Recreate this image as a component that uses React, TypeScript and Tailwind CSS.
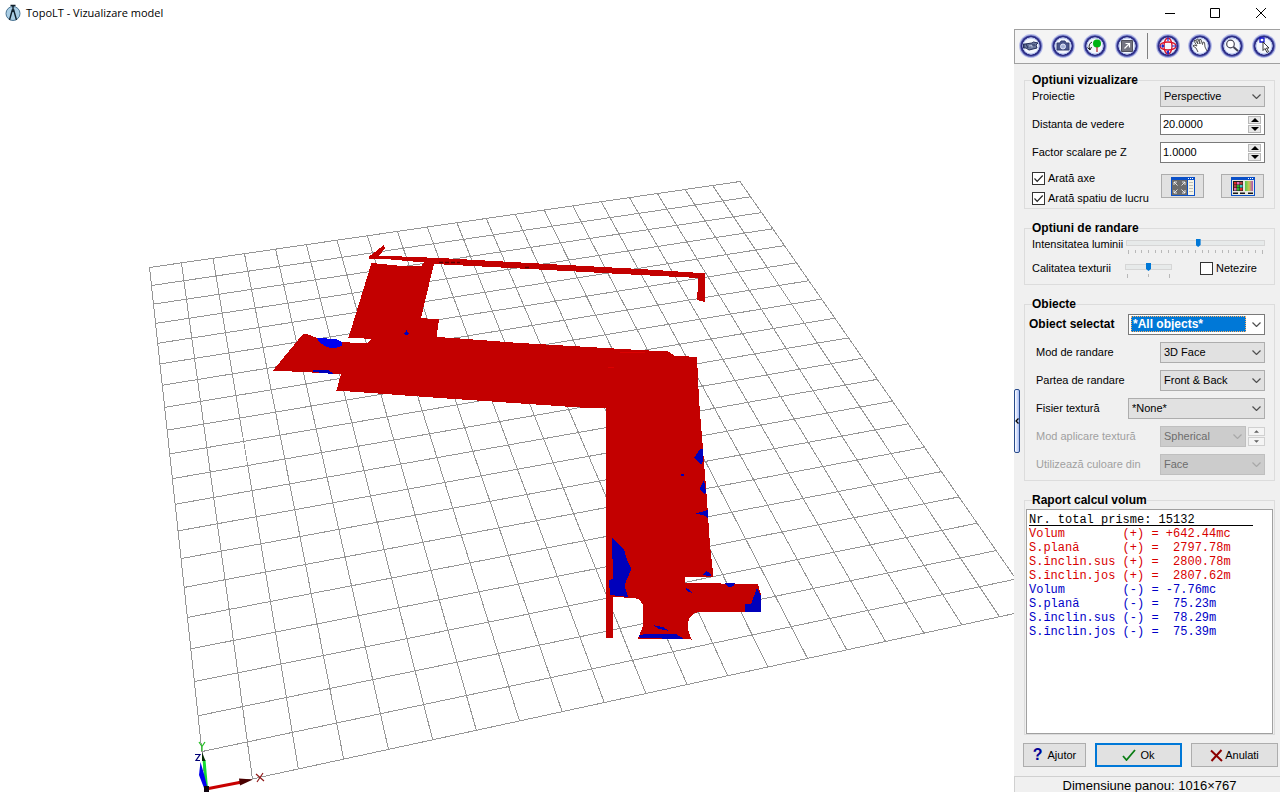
import type { ReactNode } from "react";
import clsx from "clsx";

type Point = [number, number];

const CELLS = 20;
const CORNERS: Point[] = [
  [149.5, 267.5],
  [740, 181.5],
  [1036.5, 608.7],
  [206, 789],
];

// Perspective map from the unit square to the ground plane quad
const project = (u: number, v: number): Point => {
  const [[x0, y0], [x1, y1], [x2, y2], [x3, y3]] = CORNERS;
  const dx1 = x1 - x2;
  const dx2 = x3 - x2;
  const dy1 = y1 - y2;
  const dy2 = y3 - y2;
  const sx = x0 - x1 + x2 - x3;
  const sy = y0 - y1 + y2 - y3;
  const det = dx1 * dy2 - dx2 * dy1;
  const g = (sx * dy2 - dx2 * sy) / det;
  const h = (dx1 * sy - sx * dy1) / det;
  const w = g * u + h * v + 1;
  return [
    ((x1 - x0 + g * x1) * u + (x3 - x0 + h * x3) * v + x0) / w,
    ((y1 - y0 + g * y1) * u + (y3 - y0 + h * y3) * v + y0) / w,
  ];
};

const gridPath = Array.from({ length: CELLS + 1 }, (_, i) => {
  const t = i / CELLS;
  return `M${project(t, 0)}L${project(t, 1)}M${project(0, t)}L${project(1, t)}`;
}).join("");

const Viewport = () => (
  <main className="min-w-0 flex-1 bg-white">
    <svg viewBox="0 25 1014 767" className="block h-full w-full" role="img" aria-label="Model 3D">
      <path d={gridPath} fill="none" stroke="#969696" strokeWidth="1" shapeRendering="crispEdges" />
      <g fill="#c30000" shapeRendering="crispEdges">
        <path d="M369 256.500L384 245L385 248.500L379 255.500L413 257L440 258L530 263L640 269L705 273.300V302L697 300L698.500 278L640 275L530 269L440 264.300L434 263.500L421 318L439 319.500L436.500 337L453 338L520 343L640 350L668 351.500L674 355.500L697 357L699 400L702 437L707 500L710 545L713.500 577L684.500 577V583L758 584L761 595V611.500H702L695 613L690 617L688 622V630L691.500 639.500L638 638.500L643 626V605L640 600L634 598L613.500 597L613 638H606.500L605.500 408.500L580 407.500L440 398L336.500 390.500L341 374L273 370.500L303 334L308 334.500L317 338L342 342L367 343.500L372 339L348.500 337.500L371.500 263L397 265.500L421.500 265.700L424 262.500L380 258.500L369 259Z" />
      </g>
      <g fill="#0000bb" shapeRendering="crispEdges">
        <path fill="#0000f0" d="M317 338L336 339L342 342V346L334 348.500L327 347L320 343Z" />
        <path d="M310 371L318 369.500H327L334 374L322 373Z" />
        <path d="M404 334L406.500 330L409 334L406 335.500Z" />
        <path d="M694 458L700 449H703V461L701 464.500L698 461Z" />
        <path d="M681 474H684V476H681Z" />
        <path d="M700 488L704 480L706 492L704 494L701 491Z" />
        <path d="M696 513.500L708 510V518L704 515.500Z" />
        <path d="M703 575L706 571L710 573L712 576.500Z" />
        <path d="M612 538L624 549L627 560L631.500 569L627 579L624.500 586L628 597L610 595L609 580L613 579Z" />
        <path d="M724 583H735L734 586L729 587.500Z" />
        <path d="M686 588L690 590L692 593L687 591Z" />
        <path d="M757 588L761 596V611.500H745V604L751 604Z" />
        <path d="M653 625L664 627.500L669 631L659 629Z" />
        <path d="M639 635L652 633.500L675 633.500L684 639L640 638Z" />
      </g>
      <path d="M439 262.500H460M525 267.500H531" stroke="#5c0000" strokeWidth="1.500" strokeDasharray="4 2" />
      <path d="M620 352.500H645M608 367.500H614" stroke="#dc0000" />
      <g strokeWidth="3">
        <path d="M206 789L242 782" stroke="#c80000" />
        <path d="M239 778.500L253 779.500L240 785.500Z" fill="#4a0000" stroke="none" />
        <path d="M202.500 759L205.500 760L208 788H205Z" fill="#14dc32" stroke="none" />
        <path d="M202 752L205.500 761H202Z" fill="#052a05" stroke="none" />
        <path d="M200.500 762L204 774L207.500 788H204L199 775Z" fill="#0000f0" stroke="none" />
        <path d="M204 786H209V792H204Z" fill="#100510" stroke="none" />
      </g>
      <g fill="none" strokeWidth="1.200">
        <path d="M199 742L202 746.500L205 742M202 746V751" stroke="#1ebe1e" />
        <path d="M195 754.500H200L196 760.500H200" stroke="#000078" />
        <path d="M256 774L264 781M263 773L257 782" stroke="#901818" />
      </g>
    </svg>
  </main>
);

const Logo = () => (
  <svg width="16" height="18" viewBox="0 0 16 18" aria-hidden="true">
    <circle cx="8" cy="9.500" r="7" fill="#a9cde4" stroke="#4c7695" />
    <path d="M8 1.500V8M4.500 16L7.300 6H8.700L11.500 16M5.500 1.500H10.500" fill="none" stroke="#10202c" strokeWidth="1.400" />
  </svg>
);

const TitleBar = () => (
  <header className="flex h-[25px] items-center bg-white">
    <div className="flex flex-1 items-center gap-[5px] pl-[5px]">
      <Logo />
      <h1 className="font-['Open_Sans',sans-serif] text-[11px] whitespace-nowrap text-black">TopoLT - Vizualizare model</h1>
    </div>
    <div className="flex pr-[7px]">
      {[
        { label: "Minimize", d: "M0 5.500H10", size: "w-11" },
        { label: "Maximize", d: "M.5.5H9.500V9.500H.5Z", size: "w-[46px] mr-[11px]" },
        { label: "Close", d: "M0 0L10 10M10 0L0 10", size: "w-6" },
      ].map(({ label, d, size }) => (
        <button key={label} type="button" aria-label={label} className={clsx("flex h-[25px] items-center justify-center", size)}>
          <svg width="10" height="10" viewBox="0 0 10 10" fill="none" stroke="#000">
            <path d={d} />
          </svg>
        </button>
      ))}
    </div>
  </header>
);

const ToolButton = ({ label, children }: { label: string; children: ReactNode }) => (
  <button type="button" aria-label={label} className="size-6 shrink-0">
    <svg width="24" height="24" viewBox="0 0 24 24" fill="none">
      <circle cx="12" cy="12" r="11.900" fill="#b4bae8" />
      <circle cx="12" cy="12" r="10.800" fill="#5a62b4" />
      <circle cx="12" cy="12" r="9.300" fill="#f4f7fd" stroke="#2c2c84" strokeWidth="1.800" />
      <circle cx="12" cy="12" r="8" stroke="#b4c4ee" strokeWidth="1" />
      {children}
    </svg>
  </button>
);

const Toolbar = () => (
  <div className="flex h-[35px] items-center gap-2 overflow-hidden border border-r-0 border-[#a0a0a0] bg-[#f4f4f4] pb-[2px] pl-1" role="toolbar">
    <ToolButton label="Film">
      <path d="M6 10L13 9L14.500 8L19 9L17 11L18 14L10 16L7 14L4.500 14V10Z" fill="#68769c" stroke="#26305c" />
      <path d="M5 10V14M7 10L9 14M13 11L16 11" stroke="#26305c" />
      <path d="M10 12L13 11.500V13.500" stroke="#c0c8e0" />
    </ToolButton>
    <ToolButton label="Fotografie">
      <path d="M6 9H9L10 7H14L15 9H18V16H6Z" fill="#4a568c" stroke="#343e70" />
      <circle cx="12" cy="12.500" r="2.500" fill="#a8b4d8" stroke="#e4e8f8" />
    </ToolButton>
    <ToolButton label="Roteste obiect">
      <circle cx="14" cy="9.500" r="4" fill="#00b414" />
      <path d="M14 13V18" stroke="#b02020" strokeWidth="1.200" />
      <path d="M9 8Q5 10 6.500 15M4.500 13.500L7 16L8.500 13" stroke="#222" />
    </ToolButton>
    <ToolButton label="Ecran complet">
      <path d="M6.500 6.500H17.500V17.500H6.500Z" fill="#747480" stroke="#50505c" />
      <path d="M9.500 14.500L14 10M10.500 9.500H14.500V13.500" stroke="#fff" strokeWidth="1.200" />
    </ToolButton>
    <div className="h-[26px] w-px shrink-0 bg-[#808080]" />
    <ToolButton label="Orbita">
      <ellipse cx="12" cy="12" rx="8" ry="4" stroke="#dc1428" strokeWidth="1.300" />
      <ellipse cx="12" cy="12" rx="4" ry="8" stroke="#dc1428" strokeWidth="1.300" />
      <path d="M12 3V7M12 17V21M3 12H8M16 12H21" stroke="#1e28c8" strokeWidth="1.200" />
      <path d="M6 10L9 12L6 14ZM10 18L13 16V20Z" fill="#1e28c8" />
    </ToolButton>
    <ToolButton label="Deplasare">
      <path d="M10 18L8 14L5 12L6 11L9 12L6 7L7 6L10 10L8.500 5.500L10 5L12 10L11.500 5.500L13 5.500L14.500 10.500L15 8L16.500 8.500L17 13L19 17" fill="#fff" stroke="#555" strokeWidth="1" />
    </ToolButton>
    <ToolButton label="Marire">
      <circle cx="10.500" cy="10" r="3.800" fill="#fff" stroke="#445" strokeWidth="1.200" />
      <path d="M13.500 13L18 17" stroke="#445" strokeWidth="2" />
    </ToolButton>
    <ToolButton label="Selectare">
      <path d="M8 4H12V8H8Z" stroke="#1414c8" strokeWidth="1.300" />
      <path d="M11 8V16.500L13 14.500L15 18.500L16.500 17.500L14.500 14H17Z" fill="#fff" stroke="#222" strokeWidth=".9" />
    </ToolButton>
  </div>
);

interface GroupProps {
  title: string;
  className: string;
  bodyClassName: string;
  children: ReactNode;
}

const Group = ({ title, className, bodyClassName, children }: GroupProps) => (
  <fieldset className={clsx("mr-[5px] ml-[10px] min-w-0 border border-[#dcdcdc]", className)}>
    <legend className="ml-[7px] h-3 text-[12px] leading-3 font-bold">{title}</legend>
    <div className={bodyClassName}>{children}</div>
  </fieldset>
);

const Chevron = ({ className }: { className?: string }) => (
  <svg width="9" height="5" viewBox="0 0 9 5" fill="none" stroke="currentColor" strokeWidth="1.200" className={className} aria-hidden="true">
    <path d="M.5.5L4.500 4.500L8.500.5" />
  </svg>
);

interface DropdownProps {
  id: string;
  value: string;
  width: string;
  disabled?: boolean;
}

const Dropdown = ({ id, value, width, disabled }: DropdownProps) => (
  <div className={clsx("relative h-[21px]", width, disabled ? "text-[#a8a8a8]" : "text-[#505050]")}>
    <select
      id={id}
      disabled={disabled}
      className={clsx("block h-full w-full appearance-none border pl-[3px] text-[11px] opacity-100", disabled ? "border-[#bfbfbf] bg-[#cccccc] text-[#6d6d6d]" : "border-[#adadad] bg-[#e1e1e1] text-black")}
    >
      <option>{value}</option>
    </select>
    <Chevron className="pointer-events-none absolute top-2 right-1" />
  </div>
);

const Spinner = ({ wide }: { wide?: boolean }) => (
  <span className={clsx("flex flex-col gap-px", wide ? "w-[17px]" : "w-[13px]")}>
    {["M0 3L3 0L6 3Z", "M0 0L3 3L6 0Z"].map((d, i) => (
      <button
        key={d}
        type="button"
        disabled={wide}
        aria-label={i === 0 ? "Creste" : "Scade"}
        className={clsx("flex items-center justify-center border", wide ? "h-[9px] border-[#d0d0d0] bg-[#f4f4f4]" : "h-[8px] border-[#b8b8b8] bg-[#e8e8e8]")}
      >
        <svg width={wide ? 5 : 8} height={wide ? 3 : 4} viewBox="0 0 6 3" fill={wide ? "#606060" : "#000"} aria-hidden="true">
          <path d={d} />
        </svg>
      </button>
    ))}
  </span>
);

const NumberField = ({ id, label, value }: { id: string; label: string; value: string }) => (
  <div className="flex h-5 items-center justify-between">
    <label htmlFor={id}>{label}</label>
    <div className="flex h-[21px] w-[105px] items-center border border-[#7a7a7a] bg-white pr-[3px]">
      <input id={id} defaultValue={value} className="w-0 flex-1 pl-[2px] text-[11px] outline-none" />
      <Spinner />
    </div>
  </div>
);

const CheckBox = ({ id, label, checked }: { id: string; label: string; checked?: boolean }) => (
  <div className="flex h-5 items-center gap-[3px]">
    <span className="relative flex">
      <input id={id} type="checkbox" defaultChecked={checked} className="peer size-[13px] appearance-none border border-[#333] bg-white" />
      <svg width="13" height="13" viewBox="0 0 13 13" fill="none" stroke="#222" strokeWidth="1.200" className="pointer-events-none absolute inset-0 hidden peer-checked:block" aria-hidden="true">
        <path d="M2.500 6.500L5.200 9.300L10.700 3.500" />
      </svg>
    </span>
    <label htmlFor={id} className="whitespace-nowrap">{label}</label>
  </div>
);

const Slider = ({ id, width, ticks, value }: { id: string; width: string; ticks: number; value: number }) => (
  <div className={clsx("flex h-5 shrink-0 flex-col justify-between pt-[6px]", width)}>
    <input
      id={id}
      type="range"
      defaultValue={value}
      className="m-0 block h-[6px] w-full appearance-none border border-[#d6d6d6] bg-[#e7eaea] [&::-webkit-slider-thumb]:h-[8px] [&::-webkit-slider-thumb]:w-[5px] [&::-webkit-slider-thumb]:appearance-none [&::-webkit-slider-thumb]:bg-[#0078d7] [&::-webkit-slider-thumb]:[clip-path:polygon(0_0,100%_0,100%_75%,50%_100%,0_75%)]"
    />
    <div className="flex justify-between px-[2px]">
      {Array.from({ length: ticks }, (_, i) => (
        <span key={i} className={clsx("w-px bg-[#b8b8b8]", i === 0 || i === ticks - 1 ? "h-1" : "h-[3px]")} />
      ))}
    </div>
  </div>
);

const ViewOptions = () => (
  <Group title="Optiuni vizualizare" className="mt-[10px]" bodyClassName="pr-[9px] pl-[7px]">
    <div className="flex flex-col gap-2">
      <div className="flex h-5 items-center justify-between">
        <label htmlFor="projection">Proiectie</label>
        <Dropdown id="projection" value="Perspective" width="w-[105px]" />
      </div>
      <NumberField id="distance" label="Distanta de vedere" value="20.0000" />
      <NumberField id="scale" label="Factor scalare pe Z" value="1.0000" />
    </div>
    <div className="mt-[6px] flex justify-between">
      <div>
        <CheckBox id="axes" label="Arată axe" checked />
        <CheckBox id="workspace" label="Arată spatiu de lucru" checked />
      </div>
      <div className="mt-[6px] flex gap-[17px] pr-px">
        <button type="button" aria-label="Dimensiune fereastra" className="flex h-6 w-[43px] items-center justify-center border border-[#adadad] bg-[#e1e1e1]">
          <svg width="24" height="19" viewBox="0 0 24 19" fill="none">
            <path d="M0 0H24V19H0Z" fill="#0a50c8" />
            <path d="M1 3H16V18H1Z" fill="#6c6c6c" />
            <path d="M17 3H23V18H17Z" fill="#f6f4e6" />
            <path d="M3 8V5H6M3 5L6.500 8.500M14 8V5H11M14 5L10.500 8.500M3 13V16H6M3 16L6.500 12.500M14 13V16H11M14 16L10.500 12.500" stroke="#fff" strokeWidth=".8" />
            <path d="M18 5.500H22M18 8.500H22M18 11.500H22M18 14.500H22" stroke="#c0c0b8" />
            <path d="M17 1.500H18M19 1.500H20M21 1.500H22" stroke="#fff" />
          </svg>
        </button>
        <button type="button" aria-label="Culori" className="flex h-6 w-[43px] items-center justify-center border border-[#adadad] bg-[#e1e1e1]">
          <svg width="24" height="19" viewBox="0 0 24 19">
            <defs>
              <linearGradient id="spectrum" x1="0" y1="0" x2="1" y2="0">
                <stop offset="0" stopColor="#50c850" />
                <stop offset=".5" stopColor="#c8c850" />
                <stop offset="1" stopColor="#b450b4" />
              </linearGradient>
            </defs>
            <path d="M0 0H24V19H0Z" fill="#0a50c8" />
            <path d="M1 3H23V18H1Z" fill="#e8e8e0" />
            <path d="M2 4H12V14H2Z" fill="#202020" />
            <path d="M3 5H5.500V7.500H3ZM9 11H11.500V13.500H9Z" fill="#e02828" />
            <path d="M6 5H8.500V7.500H6ZM3 11H5.500V13.500H3Z" fill="#e86ab4" />
            <path d="M9 5H11.500V7.500H9ZM3 8H5.500V10.500H3Z" fill="#b43c3c" />
            <path d="M6 8H8.500V10.500H6ZM6 11H8.500V13.500H6Z" fill="#28b428" />
            <path d="M9 8H11.500V10.500H9Z" fill="#3cc8c8" />
            <path d="M14 4H22V14H14Z" fill="url(#spectrum)" />
            <path d="M2 15.500H7V17H2ZM9 15.500H14V17H9ZM17 15.500H22V17H17Z" fill="#181818" />
            <path d="M17 1H18V2H17ZM19 1H20V2H19ZM21 1H22V2H21Z" fill="#fff" />
          </svg>
        </button>
      </div>
    </div>
  </Group>
);

const RenderOptions = () => (
  <Group title="Optiuni de randare" className="mt-[13px]" bodyClassName="pr-[9px] pb-[6px] pl-[7px]">
    <div className="flex h-5 items-center justify-between">
      <label htmlFor="light" className="whitespace-nowrap">Intensitatea luminii</label>
      <Slider id="light" width="w-[139px]" ticks={21} value={52} />
    </div>
    <div className="mt-1 flex h-5 items-center">
      <label htmlFor="texture-quality" className="w-[93px]">Calitatea texturii</label>
      <Slider id="texture-quality" width="w-[47px]" ticks={3} value={50} />
      <div className="ml-7">
        <CheckBox id="smooth" label="Netezire" />
      </div>
    </div>
  </Group>
);

const objectRows = [
  { id: "render-mode", label: "Mod de randare", value: "3D Face", width: "w-[105px]" },
  { id: "render-side", label: "Partea de randare", value: "Front & Back", width: "w-[105px]" },
  { id: "texture-file", label: "Fisier textură", value: "*None*", width: "w-[137px]" },
  { id: "texture-mode", label: "Mod aplicare textură", value: "Spherical", width: "w-[86px]", disabled: true, spinner: true },
  { id: "color-source", label: "Utilizează culoare din", value: "Face", width: "w-[105px]", disabled: true },
];

const ObjectOptions = () => (
  <Group title="Obiecte" className="mt-[13px]" bodyClassName="pt-1 pr-[9px] pb-[6px] pl-[4px]">
    <div className="flex flex-col gap-2">
      <div className="flex h-5 items-center justify-between">
        <label htmlFor="object" className="text-[12px] font-bold whitespace-nowrap">Obiect selectat</label>
        <div className="flex h-[21px] w-[137px] items-center border border-[#7a7a7a] bg-white p-[2px] text-[#505050]">
          <select id="object" className="h-[16px] w-[115px] appearance-none border border-dotted border-[#ffb060] bg-[#0078d7] pl-px text-[12px] leading-3 font-bold text-white">
            <option>*All objects*</option>
          </select>
          <Chevron className="mr-px ml-auto" />
        </div>
      </div>
      {objectRows.map(({ id, label, value, width, disabled, spinner }) => (
        <div key={id} className="flex h-5 items-center justify-between pl-[7px]">
          <label htmlFor={id} className={clsx("whitespace-nowrap", disabled && "text-[#a0a0a0]")}>{label}</label>
          <div className="flex items-center gap-[2px]">
            <Dropdown id={id} value={value} width={width} disabled={disabled} />
            {spinner && <Spinner wide />}
          </div>
        </div>
      ))}
    </div>
  </Group>
);

const gains = [
  "Volum        (+) = +642.44mc",
  "S.plană      (+) =  2797.78m",
  "S.înclin.sus (+) =  2800.78m",
  "S.înclin.jos (+) =  2807.62m",
];

const losses = [
  "Volum        (-) = -7.76mc",
  "S.plană      (-) =  75.23m",
  "S.înclin.sus (-) =  78.29m",
  "S.înclin.jos (-) =  75.39m",
];

const VolumeReport = () => (
  <Group title="Raport calcul volum" className="mt-[13px] flex flex-1 flex-col" bodyClassName="flex flex-1 flex-col px-px pt-[3px]">
    <div className="flex-1 border border-[#a0a0a0] bg-white px-[2px] pt-[3px] font-['Liberation_Mono',monospace] text-[12px] leading-[14px] whitespace-pre">
      <p className="mb-px h-[13px] w-[224px] border-b border-black">Nr. total prisme: 15132</p>
      {gains.map((line) => (
        <p key={line} className="text-[#d80000]">{line}</p>
      ))}
      {losses.map((line) => (
        <p key={line} className="text-[#0000c8]">{line}</p>
      ))}
    </div>
  </Group>
);

const Actions = () => (
  <div className="mt-2 flex justify-between pr-[2px] pl-[9px]">
    <button type="button" className="flex h-6 w-[63px] items-center justify-center gap-[5px] border border-[#adadad] bg-[#e1e1e1]">
      <span className="text-[16px] leading-4 font-bold text-[#000096]">?</span>
      Ajutor
    </button>
    <button type="button" className="flex h-6 w-[87px] items-center justify-center gap-1 border-2 border-[#0078d7] bg-[#e1e1e1]">
      <svg width="14" height="12" viewBox="0 0 14 12" fill="none" stroke="#0a7d14" strokeWidth="1.800" aria-hidden="true">
        <path d="M1 7L4.500 11L13 1" />
      </svg>
      Ok
    </button>
    <button type="button" className="flex h-6 w-[87px] items-center justify-center gap-[2px] border border-[#adadad] bg-[#e1e1e1]">
      <svg width="13" height="13" viewBox="0 0 13 13" fill="none" stroke="#8c0000" strokeWidth="2" aria-hidden="true">
        <path d="M1 1.500L12 12M11.500 1L1.500 12" />
      </svg>
      Anulati
    </button>
  </div>
);

const App = () => (
  <div className="flex min-h-screen flex-col bg-white font-['Liberation_Sans',Arial,sans-serif] text-[11px] leading-[14px] text-black">
    <TitleBar />
    <div className="flex flex-1">
      <Viewport />
      <aside className="relative mt-1 flex w-[266px] shrink-0 flex-col bg-[#f0f0f0]">
        <button type="button" aria-label="Ascunde panoul" className="absolute top-[360px] left-0 flex h-16 w-[6px] items-center justify-center rounded-[2px] border border-[#284b8c] bg-linear-to-r from-white to-[#a8bcf4]">
          <svg width="4" height="6" viewBox="0 0 4 6" fill="none" stroke="#000" strokeWidth="1.300">
            <path d="M3.500.5L1 3L3.500 5.500" />
          </svg>
        </button>
        <Toolbar />
        <ViewOptions />
        <RenderOptions />
        <ObjectOptions />
        <VolumeReport />
        <Actions />
        <footer className="mt-[9px] h-4 border-t border-l border-[#d0d0d0] pl-1 text-center text-[13px] leading-[17px]">Dimensiune panou: 1016×767</footer>
      </aside>
    </div>
  </div>
);

export default App;
